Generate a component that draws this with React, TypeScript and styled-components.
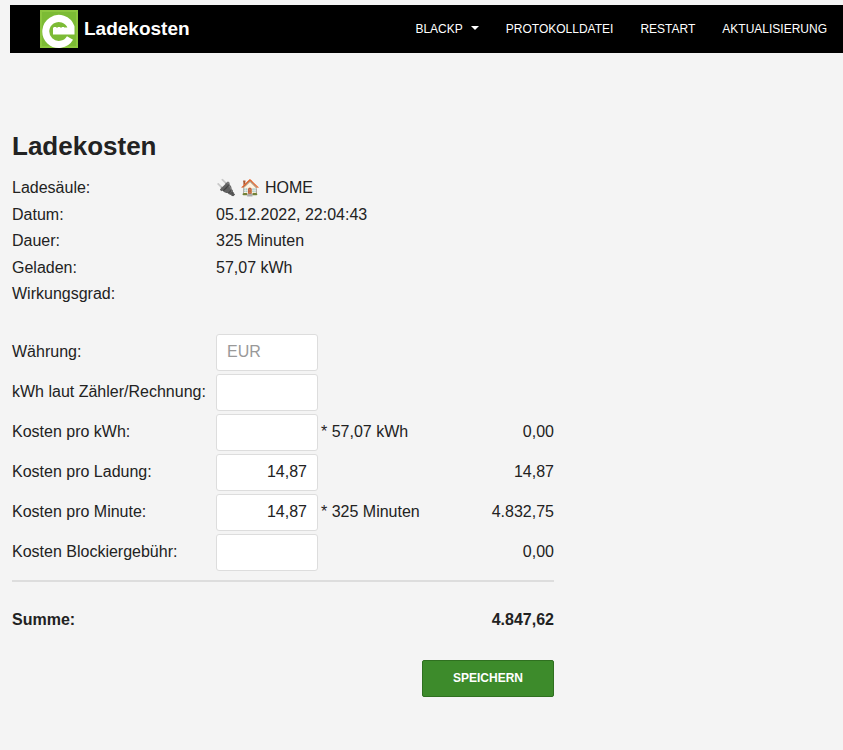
import React from "react";
import styled, { createGlobalStyle } from "styled-components";

const G = createGlobalStyle`
  html, body { margin: 0; background: #f4f4f4; font-family: "Helvetica Neue", "Liberation Sans", Arial, sans-serif; color: #222; }
  body { padding: 5px 0 0 10px; }
`;
const Nav = styled.nav`
  height: 48px; background: #000; display: flex; align-items: center; padding-left: 30px; color: #fff;
`;
const Brand = styled.div`display:flex;align-items:center;gap:6px;font-weight:bold;font-size:19px;`;
const Menu = styled.div`margin-left:auto;display:flex;gap:27px;font-size:12px;padding-right:16px;align-items:center;`;
const Caret = styled.span`display:inline-block;margin-left:8px;border-left:4px solid transparent;border-right:4px solid transparent;border-top:4px solid #fff;vertical-align:middle;position:relative;top:-2px;`;
const Main = styled.div`padding: 78px 0 0 2px; width: 542px;`;
const H1 = styled.h1`font-size:26px;margin:0 0 17px;font-weight:bold;`;
const Info = styled.div`display:grid;grid-template-columns:204px 1fr;row-gap:8px;font-size:16px;line-height:18.5px;`;
const Form = styled.div`display:grid;grid-template-columns:204px 102px 1fr auto;row-gap:3px;align-items:center;margin-top:30px;font-size:16px;`;
const Input = styled.input<{ $right?: boolean }>`
  box-sizing:border-box;width:102px;height:37px;border:1px solid #ddd;border-radius:3px;background:#fff;
  font:16px "Helvetica Neue","Liberation Sans",Arial,sans-serif;padding:0 10px;text-align:${p=>p.$right?"right":"left"};color:#222;
  &::placeholder{color:#999;}
`;
const Mult = styled.span`padding-left:3px;`;
const Val = styled.span`text-align:right;`;
const Hr = styled.div`height:2px;background:#ddd;margin:9px 0 0;`;
const Sum = styled.div`display:flex;justify-content:space-between;font-weight:bold;font-size:16px;margin-top:29px;`;
const BtnRow = styled.div`display:flex;justify-content:flex-end;margin-top:31px;`;
const Btn = styled.button`width:132px;height:37px;background:#3d8b2b;color:#fff;border:1px solid #2f7020;border-radius:2px;font:bold 12px "Liberation Sans",Arial,sans-serif;`;

const rows: [string, string, boolean, string, string][] = [
  ["Kosten pro kWh:", "", false, "* 57,07 kWh", "0,00"],
  ["Kosten pro Ladung:", "14,87", true, "", "14,87"],
  ["Kosten pro Minute:", "14,87", true, "* 325 Minuten", "4.832,75"],
  ["Kosten Blockiergebühr:", "", false, "", "0,00"],
];

export default function App() {
  return (
    <>
      <G />
      <Nav>
        <Brand>
          <svg width="38" height="38" viewBox="0 0 38 38">
            <rect width="38" height="38" fill="#8cc63f" />
            <rect x="2" y="2" width="34" height="34" fill="#7cbb35" />
            <path d="M30 28 A13 13 0 1 1 31 17 L31 21 L13 21" fill="none" stroke="#fff" strokeWidth="7" />
            <path d="M14 18h2M18 18h2M22 18h2" stroke="#fff" strokeWidth="2" />
          </svg>
          Ladekosten
        </Brand>
        <Menu>
          <span>BLACKP<Caret /></span>
          <span>PROTOKOLLDATEI</span>
          <span>RESTART</span>
          <span>AKTUALISIERUNG</span>
        </Menu>
      </Nav>
      <Main>
        <H1>Ladekosten</H1>
        <Info>
          <span>Ladesäule:</span><span>🔌 🏠 HOME</span>
          <span>Datum:</span><span>05.12.2022, 22:04:43</span>
          <span>Dauer:</span><span>325 Minuten</span>
          <span>Geladen:</span><span>57,07 kWh</span>
          <span>Wirkungsgrad:</span><span></span>
        </Info>
        <Form>
          <span>Währung:</span><Input placeholder="EUR" /><span /><span />
          <span>kWh laut Zähler/Rechnung:</span><Input /><span /><span />
          {rows.map(r => (
            <React.Fragment key={r[0]}>
              <span>{r[0]}</span>
              <Input $right={r[2]} defaultValue={r[1]} />
              <Mult>{r[3]}</Mult>
              <Val>{r[4]}</Val>
            </React.Fragment>
          ))}
        </Form>
        <Hr />
        <Sum><span>Summe:</span><span>4.847,62</span></Sum>
        <BtnRow><Btn>SPEICHERN</Btn></BtnRow>
      </Main>
    </>
  );
}
